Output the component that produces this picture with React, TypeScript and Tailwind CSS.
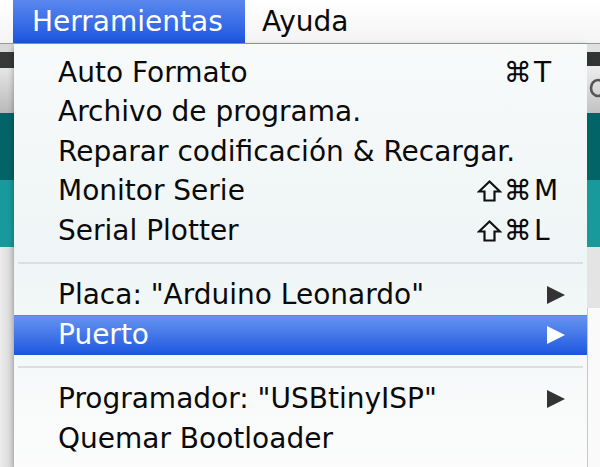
import React from "react";

type Item =
  | { kind: "item"; label: string; shift?: boolean; key?: string; sub?: boolean; active?: boolean }
  | { kind: "sep" };

const items: Item[] = [
  { kind: "item", label: "Auto Formato", key: "T" },
  { kind: "item", label: "Archivo de programa." },
  { kind: "item", label: "Reparar codificación & Recargar." },
  { kind: "item", label: "Monitor Serie", shift: true, key: "M" },
  { kind: "item", label: "Serial Plotter", shift: true, key: "L" },
  { kind: "sep" },
  { kind: "item", label: 'Placa: "Arduino Leonardo"', sub: true },
  { kind: "item", label: "Puerto", sub: true, active: true },
  { kind: "sep" },
  { kind: "item", label: 'Programador: "USBtinyISP"', sub: true },
  { kind: "item", label: "Quemar Bootloader" },
];

function Arrow({ white }: { white?: boolean }) {
  return (
    <svg width="18" height="18" viewBox="0 0 18 18" className="shrink-0">
      <polygon points="0,0 18,9 0,18" fill={white ? "#ffffff" : "#333333"} />
    </svg>
  );
}

function ShiftIcon() {
  return (
    <svg width="25" height="22" viewBox="0 0 25 22" className="shrink-0">
      <polygon
        points="12.5,1.5 2,11.5 7.5,11.5 7.5,20.5 17.5,20.5 17.5,11.5 23,11.5"
        fill="none"
        stroke="#111"
        strokeWidth="2.2"
        strokeLinejoin="miter"
      />
    </svg>
  );
}

function LeftStrip() {
  return (
    <div className="w-[14px] flex flex-col shrink-0">
      <div className="h-[8px] bg-[#d9d9d9]" />
      <div className="h-[16px] bg-[#383a3a]" />
      <div className="h-[45px] bg-gradient-to-b from-[#e6e6e6] to-[#b9b9b9]" />
      <div className="h-[67px] bg-[#036467]" />
      <div className="h-[67px] bg-[#18999b]" />
      <div className="flex-1 bg-gradient-to-r from-[#ececec] to-[#d6d6d6]" />
    </div>
  );
}

function RightStrip() {
  return (
    <div className="w-[13px] flex flex-col shrink-0">
      <div className="h-[8px] bg-[#e0e0e0]" />
      <div className="h-[14px] bg-[#333535]" />
      <div className="h-[47px] bg-gradient-to-b from-[#eeeeee] to-[#c2c2c2] pl-[2px] pt-[12px] overflow-hidden">
        <svg width="14" height="20" viewBox="0 0 14 20">
          <ellipse cx="9" cy="10" rx="7" ry="8" fill="none" stroke="#555" strokeWidth="2.6" />
        </svg>
      </div>
      <div className="h-[67px] bg-[#036467]" />
      <div className="h-[67px] bg-[#18999b]" />
      <div className="h-[61px] bg-[#e4e4e4]" />
      <div className="flex-1 bg-[#fafafa] border-l border-[#c8c8c8]" />
    </div>
  );
}

export default function App() {
  return (
    <div
      className="w-[600px] h-[467px] overflow-hidden flex flex-col bg-white text-[#0a0a0a]"
      style={{ fontFamily: '"DejaVu Sans", Verdana, sans-serif' }}
    >
      <div className="h-[44px] flex items-stretch bg-gradient-to-b from-white to-[#f4f4f4] border-b border-[#9a9a9a] shrink-0">
        <div className="w-[13px]" />
        <div className="w-[232px] pl-[19px] flex items-center text-[28px] text-white bg-gradient-to-b from-[#5b88ee] to-[#1b53e0]">
          Herramientas
        </div>
        <div className="pl-[17px] flex items-center text-[28px]">Ayuda</div>
      </div>

      <div className="flex-1 flex">
        <LeftStrip />
        <div className="flex-1 flex flex-col pt-[9px] bg-gradient-to-b from-[#f8fafa] via-[#eff5f6] via-50% to-[#fcfcfc] shadow-[0_2px_6px_rgba(0,0,0,0.35)]">
          {items.map((it, i) =>
            it.kind === "sep" ? (
              <div key={i} className="h-[25px] flex items-center px-[4px]">
                <div className="h-[2px] w-full bg-[#dedede]" />
              </div>
            ) : (
              <div
                key={i}
                className={
                  "h-[39.5px] flex items-center pl-[44px] pr-[22px] text-[28px] " +
                  (it.active
                    ? "bg-gradient-to-b from-[#6793f0] to-[#1c55df] text-white border-t border-[#5584ea]"
                    : "")
                }
              >
                <span className="flex-1 whitespace-nowrap">{it.label}</span>
                {it.key && (
                  <span className="flex items-center">
                    <span className="w-[52px] flex items-center justify-end gap-[2px]">
                      {it.shift && <ShiftIcon />}
                      <span>⌘</span>
                    </span>
                    <span className="w-[33px] pl-[2px]">{it.key}</span>
                  </span>
                )}
                {it.sub && <Arrow white={it.active} />}
              </div>
            )
          )}
        </div>
        <RightStrip />
      </div>
    </div>
  );
}
